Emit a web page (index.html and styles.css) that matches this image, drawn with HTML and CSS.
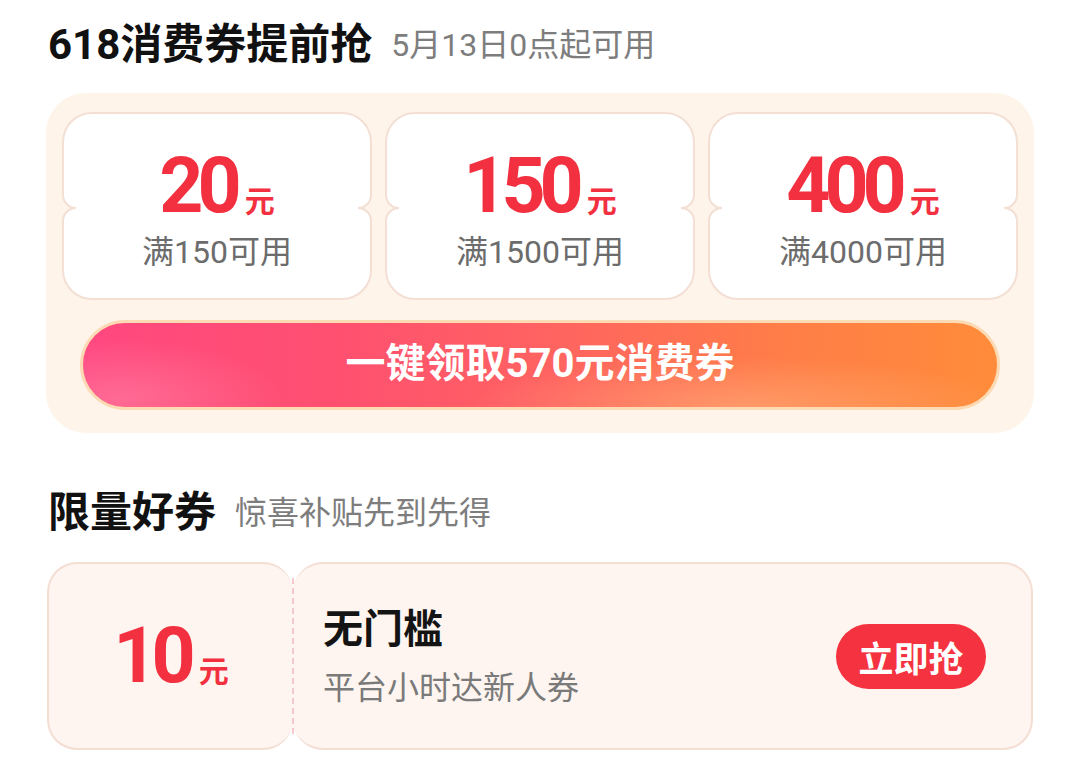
FILE: index.html
```html
<!DOCTYPE html>
<html lang="zh-CN">
<head>
    <meta charset="UTF-8">
    <meta name="viewport" content="width=device-width, initial-scale=1.0">
    <title>618消费券</title>
    <link rel="stylesheet" href="styles.css">
</head>
<body>
    <div class="page">
        <div class="sec-head head-top">
            <h2>618消费券提前抢</h2>
            <span>5月13日0点起可用</span>
        </div>

        <div class="bundle">
            <div class="tickets">
                <div class="ticket">
                    <div class="amt"><b>20</b><small>元</small></div>
                    <div class="cond">满150可用</div>
                </div>
                <div class="ticket">
                    <div class="amt"><b>150</b><small>元</small></div>
                    <div class="cond">满1500可用</div>
                </div>
                <div class="ticket">
                    <div class="amt"><b>400</b><small>元</small></div>
                    <div class="cond">满4000可用</div>
                </div>
            </div>
            <button class="grab-all">一键领取570元消费券</button>
        </div>

        <div class="sec-head head-limit">
            <h2>限量好券</h2>
            <span>惊喜补贴先到先得</span>
        </div>

        <div class="coupon">
            <div class="coupon-val">
                <div class="amt"><b>10</b><small>元</small></div>
            </div>
            <div class="coupon-main">
                <div class="info">
                    <div class="name">无门槛</div>
                    <div class="desc">平台小时达新人券</div>
                </div>
                <button class="grab">立即抢</button>
            </div>
        </div>
    </div>
</body>
</html>
```

FILE: styles.css
```css
body {
    margin: 0;
    background: #fff;
    font-family: 'Roboto', 'Noto Sans CJK SC', sans-serif;
    color: #111;
}
.page {
    width: 988px;
    padding: 0 46px;
}

/* section titles */
.sec-head {
    display: flex;
    align-items: center;
    gap: 19px;
    padding-left: 2px;
    height: 50px;
}
.sec-head h2 {
    margin: 0;
    font-size: 42px;
    line-height: 50px;
    font-weight: 700;
    color: #111;
}
.sec-head span {
    font-size: 32px;
    line-height: 50px;
    color: #7d7d7d;
}
.head-top {
    padding-top: 20px;
    margin-bottom: 23px;
}
.head-limit {
    margin-top: 55px;
    margin-bottom: 24px;
}

/* 618 bundle */
.bundle {
    background: #fef4ea;
    border-radius: 40px;
    padding: 19px 16px 23px;
}
.tickets {
    display: flex;
    gap: 13px;
}
.ticket {
    position: relative;
    flex: 1;
    height: 188px;
    box-sizing: border-box;
    padding-top: 8px;
    background: #fff;
    border: 2px solid #f3dfd4;
    border-radius: 30px;
    display: flex;
    flex-direction: column;
    align-items: center;
    justify-content: center;
    gap: 9px;
}
.ticket::before,
.ticket::after {
    content: '';
    position: absolute;
    top: calc(50% - 13px);
    width: 16px;
    height: 30px;
    background: url("data:image/svg+xml,%3Csvg xmlns='http://www.w3.org/2000/svg' width='16' height='30'%3E%3Cpath d='M0 2H1A13 13 0 0 0 14 15A13 13 0 0 0 1 28H0Z' fill='%23fef4ea'/%3E%3Cpath d='M1 2A13 13 0 0 0 14 15A13 13 0 0 0 1 28' fill='none' stroke='%23f3dfd4' stroke-width='2'/%3E%3C/svg%3E") no-repeat;
}
.ticket::before {
    left: -2px;
}
.ticket::after {
    right: -2px;
    transform: scaleX(-1);
}

.amt {
    color: #f2303f;
    line-height: 74px;
    height: 74px;
    white-space: nowrap;
}
.amt b {
    font-size: 77px;
    font-weight: 700;
    letter-spacing: -6px;
}
.amt small {
    font-size: 30px;
    font-weight: 700;
    line-height: 30px;
    margin-left: 9px;
}
.cond {
    font-size: 32px;
    line-height: 40px;
    color: #6c6c6c;
}

.grab-all {
    display: block;
    width: calc(100% - 36px);
    height: 90px;
    margin: 20px 18px 0;
    border: 3px solid #fcdab4;
    border-radius: 45px;
    background:
        radial-gradient(ellipse 30% 60% at 72% 100%, rgba(255, 190, 140, 0.45), rgba(255, 190, 140, 0)),
        radial-gradient(ellipse 18% 70% at 4% 90%, rgba(255, 140, 170, 0.5), rgba(255, 140, 170, 0)),
        linear-gradient(90deg, #ff4880 0%, #ff5070 28%, #ff6460 52%, #ff7d48 76%, #ff8c3a 100%);
    color: #fff;
    font-family: 'Roboto', 'Noto Sans CJK SC', sans-serif;
    font-size: 40px;
    font-weight: 700;
    line-height: 1;
    padding: 0 0 3px;
}

/* limited coupon */
.coupon {
    display: flex;
    height: 188px;
    margin: 0 1px;
}
.coupon-val {
    flex: none;
    width: 246px;
    box-sizing: border-box;
    background: #fef5f0;
    border: 2px solid #f4ded4;
    border-right: none;
    border-radius: 30px;
    display: flex;
    align-items: center;
    justify-content: center;
}
.coupon-main {
    position: relative;
    flex: 1;
    box-sizing: border-box;
    background: #fef5f0;
    border: 2px solid #f4ded4;
    border-left: none;
    border-radius: 30px;
    display: flex;
    align-items: center;
    justify-content: space-between;
    padding: 0 45px 0 30px;
}
.coupon-main::before {
    content: '';
    position: absolute;
    left: -1px;
    top: 14px;
    bottom: 14px;
    border-left: 2px dashed #f5c9cb;
}
.info {
    display: flex;
    flex-direction: column;
    gap: 13px;
}
.name {
    font-size: 40px;
    line-height: 50px;
    font-weight: 700;
    color: #141414;
}
.desc {
    font-size: 32px;
    line-height: 40px;
    color: #7a7a7a;
}
.grab {
    width: 150px;
    height: 65px;
    border: none;
    border-radius: 33px;
    background: #f5323f;
    color: #fff;
    font-family: 'Roboto', 'Noto Sans CJK SC', sans-serif;
    font-size: 35px;
    font-weight: 700;
    padding: 0;
}
```
